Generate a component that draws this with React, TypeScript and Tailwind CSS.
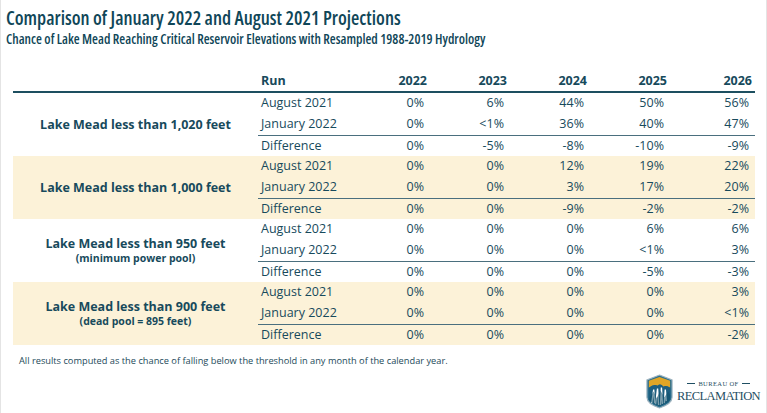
import React from "react"

type Row = { run: string; values: string[] }
type Group = { label: string; note?: string; shaded: boolean; rows: Row[] }

const years = ["2022", "2023", "2024", "2025", "2026"]

const groups: Group[] = [
  {
    label: "Lake Mead less than 1,020 feet",
    shaded: false,
    rows: [
      { run: "August 2021", values: ["0%", "6%", "44%", "50%", "56%"] },
      { run: "January 2022", values: ["0%", "<1%", "36%", "40%", "47%"] },
      { run: "Difference", values: ["0%", "-5%", "-8%", "-10%", "-9%"] },
    ],
  },
  {
    label: "Lake Mead less than 1,000 feet",
    shaded: true,
    rows: [
      { run: "August 2021", values: ["0%", "0%", "12%", "19%", "22%"] },
      { run: "January 2022", values: ["0%", "0%", "3%", "17%", "20%"] },
      { run: "Difference", values: ["0%", "0%", "-9%", "-2%", "-2%"] },
    ],
  },
  {
    label: "Lake Mead less than 950 feet",
    note: "(minimum power pool)",
    shaded: false,
    rows: [
      { run: "August 2021", values: ["0%", "0%", "0%", "6%", "6%"] },
      { run: "January 2022", values: ["0%", "0%", "0%", "<1%", "3%"] },
      { run: "Difference", values: ["0%", "0%", "0%", "-5%", "-3%"] },
    ],
  },
  {
    label: "Lake Mead less than 900 feet",
    note: "(dead pool = 895 feet)",
    shaded: true,
    rows: [
      { run: "August 2021", values: ["0%", "0%", "0%", "0%", "3%"] },
      { run: "January 2022", values: ["0%", "0%", "0%", "0%", "<1%"] },
      { run: "Difference", values: ["0%", "0%", "0%", "0%", "-2%"] },
    ],
  },
]

const cols = "grid grid-cols-[91px_80px_80px_80px_80px_85px]"

function Logo() {
  return (
    <div className="flex items-center gap-[3px]">
      <svg width="29" height="35" viewBox="0 0 30 36">
        <path d="M15 1 L28 6 L28 24 Q28 31 15 35 Q2 31 2 24 L2 6 Z" fill="#2b6f8e" stroke="#9fb4c0" strokeWidth="1.2" />
        <path d="M4 7 L15 3 L26 7 L26 14 Q22 11 19 13 Q16 9 13 12 Q9 10 4 14 Z" fill="#e0a526" />
        <path d="M4 14 Q9 10 13 12 Q16 9 19 13 Q22 11 26 14 L26 24 Q26 29 15 33 Q4 29 4 24 Z" fill="#1e5f80" />
        <path d="M7 30 L9 16 L10 30 M11 31 L13 15 L14 32 M16 32 L17 14 L18 31 M20 30 L21 16 L22 28" stroke="#ffffff" strokeWidth="1.4" fill="none" />
        <path d="M5 24 L9 18 L12 25 L16 17 L20 24 L24 18 L26 22 L26 26 Q26 29 15 33 Q4 29 4 26 Z" fill="#0f4f6a" opacity="0.55" />
      </svg>
      <div className="flex flex-col items-center leading-none text-[#1f4f63] font-['Liberation_Serif',serif]">
        <div className="flex items-center gap-[3px] text-[6.5px] tracking-[0.4px]">
          <span className="w-[8px] h-px bg-[#1f4f63]" />
          <span>BUREAU OF</span>
          <span className="w-[8px] h-px bg-[#1f4f63]" />
        </div>
        <div className="text-[12.5px] mt-[3px] tracking-[-0.6px]">RECLAMATION</div>
      </div>
    </div>
  )
}

export default function App() {
  return (
    <div className="w-[767px] h-[413px] bg-white border-l border-r border-[#e4e4e4] flex flex-col font-['Open_Sans',sans-serif] text-[#174a5c] overflow-hidden">
      <div className="pl-[5px] pt-[6px] text-[#0f4658] font-stretch-condensed">
        <h1 className="text-[19px] leading-[24px] font-semibold">Comparison of January 2022 and August 2021 Projections</h1>
        <h2 className="text-[13.5px] leading-[18px] font-semibold">Chance of Lake Mead Reaching Critical Reservoir Elevations with Resampled 1988-2019 Hydrology</h2>
      </div>

      <div className="ml-[12px] mt-[24px] w-[742px] text-[12.5px]">
        <div className="flex border-b-2 border-[#1d4f60] h-[21px] items-center font-bold">
          <div className="w-[245px]" />
          <div className={`${cols} flex-1`}>
            <div className="pl-[3px]">Run</div>
            {years.map((y) => (
              <div key={y} className="text-right pr-[2px]">{y}</div>
            ))}
          </div>
        </div>

        {groups.map((g) => (
          <div key={g.label} className={`flex ${g.shaded ? "bg-[#fcf2d8]" : "bg-white"}`}>
            <div className="w-[245px] flex flex-col items-center justify-center font-bold">
              <div className="text-[12.5px] leading-[16px]">{g.label}</div>
              {g.note && <div className="text-[10.5px] leading-[13px]">{g.note}</div>}
            </div>
            <div className="flex-1 flex flex-col">
              {g.rows.map((r, i) => (
                <div
                  key={r.run}
                  className={`${cols} h-[21px] items-center ${i === 2 ? "border-t-[1.5px] border-[#4a6f7e]" : ""}`}
                >
                  <div className="pl-[3px]">{r.run}</div>
                  {r.values.map((v, j) => (
                    <div key={j} className="text-right pr-[5px]">{v}</div>
                  ))}
                </div>
              ))}
            </div>
          </div>
        ))}
      </div>

      <div className="pl-[18px] mt-[8px] text-[9.25px] leading-[15px] text-[#1d4a5a]">
        All results computed as the chance of falling below the threshold in any month of the calendar year.
      </div>

      <div className="flex justify-end pr-[6px] mt-[6px]">
        <Logo />
      </div>
    </div>
  )
}
